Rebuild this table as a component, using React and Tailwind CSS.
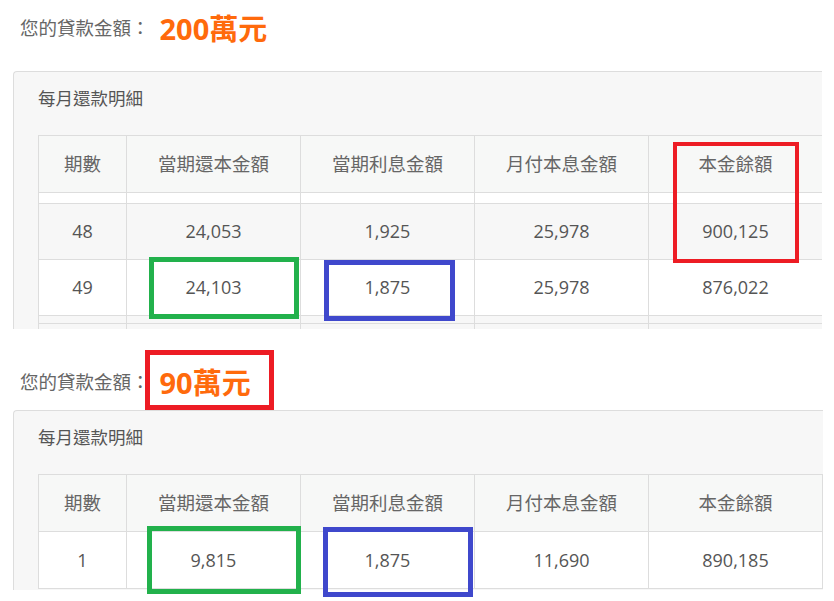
import React from "react";

const FONT = "font-['Open_Sans','Noto_Sans_CJK_TC',sans-serif]";

const HEADERS = ["期數", "當期還本金額", "當期利息金額", "月付本息金額", "本金餘額"];

const Cell = ({ children, className = "" }) => (
  <div
    className={`flex items-center justify-center border-r border-b border-[#dddddd] ${className}`}
  >
    {children}
  </div>
);

const Row = ({ cells = [], height, bg }) => (
  <>
    {[0, 1, 2, 3, 4].map((i) => (
      <Cell key={i} className={`${height} ${bg} text-[18px] text-[#555555]`}>
        {cells[i]}
      </Cell>
    ))}
  </>
);

const HeaderRow = () => (
  <>
    {HEADERS.map((h) => (
      <Cell key={h} className="h-[57px] bg-[#f7f8f7] text-[18.5px] text-[#666666]">
        {h}
      </Cell>
    ))}
  </>
);

const LoanTitle = ({ amount, className = "" }) => (
  <div className={`flex items-center pl-5 h-[56px] ${className}`}>
    <span className="text-[18.5px] text-[#666666]">您的貸款金額：</span>
    <span className="ml-[10px] text-[29px] font-bold text-[#ff6a0c] leading-none">
      {amount}
    </span>
  </div>
);

const Panel = ({ children, className = "" }) => (
  <div
    className={`ml-[13px] overflow-hidden border-l border-t border-[#dddddd] rounded-tl-[4px] bg-[#f7f7f7] ${className}`}
  >
    <div className="h-[52px] flex items-center pl-[24px] text-[17.5px] text-[#555555]">
      每月還款明細
    </div>
    <div className="mt-[11px] ml-[24px] w-[785px] grid grid-cols-[88px_174px_174px_174px_174px] border-l border-t border-[#dddddd]">
      {children}
    </div>
  </div>
);

// annotation frame drawn over the screenshot
const Mark = ({ className }) => (
  <div className={`absolute pointer-events-none ${className}`} />
);

export default function App() {
  return (
    <div className={`relative w-[834px] h-[601px] bg-white overflow-hidden ${FONT}`}>
      <LoanTitle amount="200萬元" className="mb-[15px]" />
      <Panel className="w-[809px] h-[258px]">
        <HeaderRow />
        <Row height="h-[11px]" bg="bg-white" />
        <Row cells={["48", "24,053", "1,925", "25,978", "900,125"]} height="h-[56px]" bg="bg-[#f7f7f7]" />
        <Row cells={["49", "24,103", "1,875", "25,978", "876,022"]} height="h-[56px]" bg="bg-white" />
        <Row height="h-[8px]" bg="bg-[#f7f7f7]" />
        <Row height="h-[20px]" bg="bg-[#f7f7f7]" />
      </Panel>

      <LoanTitle amount="90萬元" className="mt-[25px]" />
      <Panel className="w-[810px] h-[180px]">
        <HeaderRow />
        <Row cells={["1", "9,815", "1,875", "11,690", "890,185"]} height="h-[57px]" bg="bg-white" />
      </Panel>

      <Mark className="left-[673px] top-[142px] w-[126px] h-[121px] border-[4px] border-[#ed1c24]" />
      <Mark className="left-[149px] top-[257px] w-[150px] h-[62px] border-[5px] border-[#22b14c]" />
      <Mark className="left-[324px] top-[260px] w-[131px] h-[61px] border-[5px] border-[#3f48cc]" />
      <Mark className="left-[145px] top-[350px] w-[129px] h-[60px] border-[5px] border-[#ed1c24]" />
      <Mark className="left-[147px] top-[526px] w-[154px] h-[68px] border-[5px] border-[#22b14c]" />
      <Mark className="left-[323px] top-[527px] w-[150px] h-[70px] border-[5px] border-[#3f48cc]" />
    </div>
  );
}
